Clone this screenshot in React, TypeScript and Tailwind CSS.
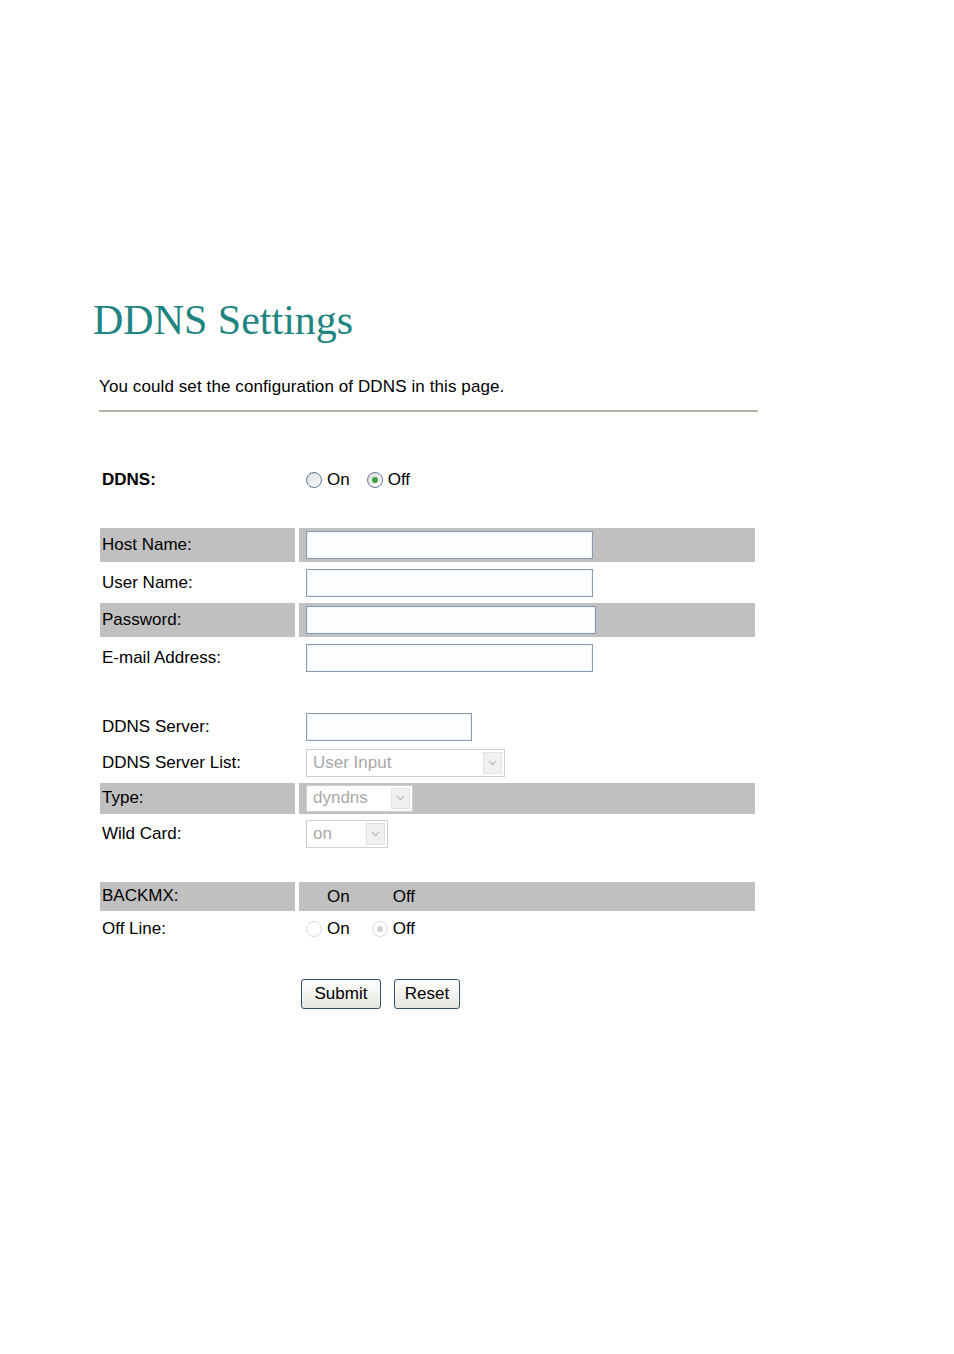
import React from 'react';

const font = { fontFamily: '"Liberation Sans", Arial, sans-serif' };

// one table row: label cell + value cell, optionally with grey background
const Row: React.FC<{ label: string; gray?: boolean; h: string; children?: React.ReactNode }> = ({ label, gray, h, children }) => (
  <div className={`flex gap-[4px] ${h}`}>
    <div className={`w-[195px] flex items-center pl-[2px] ${gray ? 'bg-[#c0c0c0]' : ''}`}>{label}:</div>
    <div className={`w-[456px] flex items-center pl-[7px] ${gray ? 'bg-[#c0c0c0]' : ''}`}>{children}</div>
  </div>
);

const TextBox: React.FC<{ w: string }> = ({ w }) => (
  <div className={`${w} h-[28px] border border-[#8a9bb0] bg-[#fbfdff] shadow-[inset_0_0_0_1px_#eef3fa]`} />
);

const Select: React.FC<{ w: string; h: string; value: string }> = ({ w, h, value }) => (
  <div className={`${w} ${h} flex items-center border border-[#cfcfcf] bg-white`}>
    <span className="flex-1 pl-[6px] text-[#a8a8a8]">{value}</span>
    <span className="w-[19px] h-[calc(100%-4px)] mr-[2px] flex items-center justify-center bg-[#f0f0f0] border border-[#e2e2e2]">
      <svg width="9" height="6" viewBox="0 0 9 6">
        <path d="M1 1 L4.5 4.5 L8 1" fill="none" stroke="#c4c4c4" strokeWidth="1.6" />
      </svg>
    </span>
  </div>
);

const Radio: React.FC<{ checked?: boolean; disabled?: boolean }> = ({ checked, disabled }) => (
  <span
    className={`w-[16px] h-[16px] rounded-full flex items-center justify-center border ${
      disabled ? 'border-[#dcdcdc] bg-white' : 'border-[#5f7590] bg-gradient-to-br from-[#dcdcdc] to-white'
    }`}
  >
    {checked && <span className={`w-[6px] h-[6px] rounded-full ${disabled ? 'bg-[#cfcfcf]' : 'bg-[#3aa53a]'}`} />}
  </span>
);

const Button: React.FC<{ label: string; w: string }> = ({ label, w }) => (
  <button className={`${w} h-[30px] rounded-[3px] border border-[#33506e] bg-gradient-to-b from-white to-[#e6e6df] text-[17px] text-black`}>
    {label}
  </button>
);

export default function App() {
  return (
    <div className="w-[954px] h-[1354px] bg-white text-black text-[17px]" style={font}>
      <div className="pt-[296px] pl-[93px]">
        <h1 className="text-[42px] leading-[48px] text-[#1f8580]" style={{ fontFamily: '"Liberation Serif", "Times New Roman", serif' }}>
          DDNS Settings
        </h1>
        <div className="ml-[6px] mt-[33px] leading-[20px] tracking-[0.1px]">You could set the configuration of DDNS in this page.</div>
        <div className="ml-[6px] mt-[13px] w-[659px] h-[2px] bg-[#b6b4a4]" />

        <div className="ml-[7px] mt-[53px]">
          <div className="flex gap-[4px] h-[30px]">
            <div className="w-[195px] flex items-center pl-[2px] font-bold">DDNS:</div>
            <div className="flex items-center pl-[7px]">
              <Radio />
              <span className="ml-[5px]">On</span>
              <span className="ml-[17px]"><Radio checked /></span>
              <span className="ml-[5px]">Off</span>
            </div>
          </div>

          <div className="mt-[33px] flex flex-col gap-[3.5px]">
            <Row label="Host Name" gray h="h-[34px]"><TextBox w="w-[287px]" /></Row>
            <Row label="User Name" h="h-[34px]"><TextBox w="w-[287px]" /></Row>
            <Row label="Password" gray h="h-[34px]"><TextBox w="w-[290px]" /></Row>
            <Row label="E-mail Address" h="h-[34px]"><TextBox w="w-[287px]" /></Row>
          </div>

          <div className="mt-[36px] flex flex-col gap-[3px]">
            <Row label="DDNS Server" h="h-[33px]"><TextBox w="w-[166px]" /></Row>
            <Row label="DDNS Server List" h="h-[33px]"><Select w="w-[199px]" h="h-[28px]" value="User Input" /></Row>
            <Row label="Type" gray h="h-[31px]"><Select w="w-[107px]" h="h-[27px]" value="dyndns" /></Row>
            <Row label="Wild Card" h="h-[34px]"><Select w="w-[82px]" h="h-[28px]" value="on" /></Row>
          </div>

          <div className="mt-[31px] flex flex-col gap-[3px]">
            <Row label="BACKMX" gray h="h-[29px]">
              <span className="ml-[21px] mt-[2px]">On</span>
              <span className="ml-[43px] mt-[2px]">Off</span>
            </Row>
            <Row label="Off Line" h="h-[31px]">
              <Radio disabled />
              <span className="ml-[5px]">On</span>
              <span className="ml-[22px]"><Radio checked disabled /></span>
              <span className="ml-[5px]">Off</span>
            </Row>
          </div>

          <div className="mt-[34px] pl-[201px] flex gap-[13px]">
            <Button label="Submit" w="w-[80px]" />
            <Button label="Reset" w="w-[66px]" />
          </div>
        </div>
      </div>
    </div>
  );
}
